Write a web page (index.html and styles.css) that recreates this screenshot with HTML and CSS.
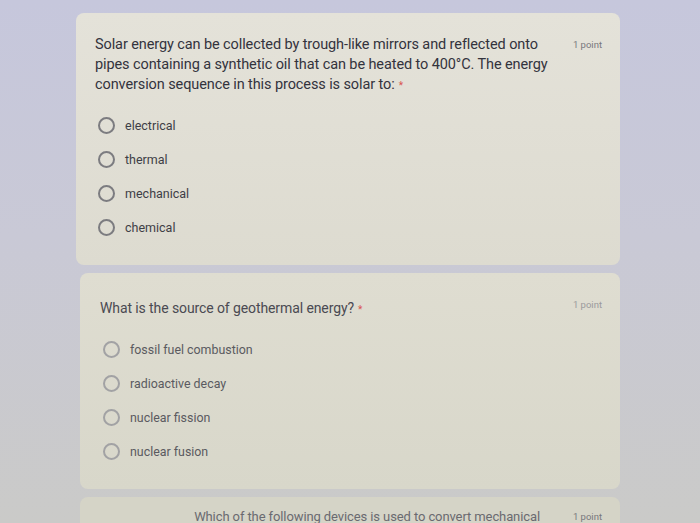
FILE: index.html
```html
<!DOCTYPE html>
<html>
<head>
<meta charset="utf-8">
<link rel="stylesheet" href="styles.css">
</head>
<body>
<div class="page">
  <section class="card card-one">
    <div class="head">
      <div class="question">Solar energy can be collected by trough-like mirrors and reflected onto pipes containing a synthetic oil that can be heated to 400°C. The energy conversion sequence in this process is solar to:<span class="req">*</span></div>
      <div class="points">1 point</div>
    </div>
    <ul class="options">
      <li><span class="radio"></span><span class="label">electrical</span></li>
      <li><span class="radio"></span><span class="label">thermal</span></li>
      <li><span class="radio"></span><span class="label">mechanical</span></li>
      <li><span class="radio"></span><span class="label">chemical</span></li>
    </ul>
  </section>
  <section class="card card-two">
    <div class="head">
      <div class="question">What is the source of geothermal energy?<span class="req">*</span></div>
      <div class="points">1 point</div>
    </div>
    <ul class="options">
      <li><span class="radio"></span><span class="label">fossil fuel combustion</span></li>
      <li><span class="radio"></span><span class="label">radioactive decay</span></li>
      <li><span class="radio"></span><span class="label">nuclear fission</span></li>
      <li><span class="radio"></span><span class="label">nuclear fusion</span></li>
    </ul>
  </section>
  <section class="card card-three">
    <div class="head">
      <div class="question">Which of the following devices is used to convert mechanical</div>
      <div class="points">1 point</div>
    </div>
  </section>
</div>
</body>
</html>
```
FILE: styles.css
```css
html, body {
  margin: 0;
  padding: 0;
}
body {
  width: 700px;
  height: 523px;
  overflow: hidden;
  background: linear-gradient(180deg, #c6c7dc 0%, #c9c9d6 45%, #cacac8 100%);
  font-family: "Roboto", "Liberation Sans", sans-serif;
}
.page {
  padding: 13px 80px 0 76px;
  display: flex;
  flex-direction: column;
  gap: 8px;
}
.card {
  border-radius: 8px;
  background: #e2e0d5;
}
.card-one {
  height: 252px;
  padding: 22px 18px 0 19px;
  box-sizing: border-box;
  background: linear-gradient(180deg, #e4e2d9 0%, #dddbd0 100%);
}
.card-two {
  margin-left: 4px;
  height: 216px;
  padding: 22px 18px 0 20px;
  box-sizing: border-box;
  background: linear-gradient(180deg, #dfddd1 0%, #d8d7ca 100%);
}
.card-three {
  margin-left: 4px;
  height: 40px;
  padding: 12px 18px 0 20px;
  box-sizing: border-box;
  background: #d5d4c7;
}
.head {
  display: flex;
  justify-content: space-between;
  align-items: flex-start;
}
.question {
  width: 462px;
  font-size: 14.5px;
  line-height: 20px;
  color: #33333d;
  letter-spacing: -0.1px;
}
.card-two .question {
  font-size: 14px;
  color: #4a4a52;
  padding-top: 3px;
}
.card-three .question {
  color: #6a6a70;
  text-align: right;
  width: 440px;
  font-size: 13px;
  line-height: 16px;
}
.req {
  color: #d9534f;
  font-size: 10px;
  margin-left: 4px;
}
.points {
  font-size: 9.5px;
  line-height: 20px;
  color: #77777c;
  white-space: nowrap;
}
.card-two .points {
  color: #9a9a9c;
}
.card-three .points {
  line-height: 16px;
}
.options {
  list-style: none;
  margin: 12px 0 0 0;
  padding: 0 0 0 3px;
  display: flex;
  flex-direction: column;
}
.card-two .options {
  margin-top: 12px;
  padding-left: 3px;
}
.options li {
  height: 34px;
  display: flex;
  align-items: center;
  gap: 10px;
}
.radio {
  width: 13px;
  height: 13px;
  border: 2px solid #7c7c80;
  border-radius: 50%;
  flex: none;
}
.card-two .radio {
  border-color: #a2a2a4;
}
.label {
  font-size: 12.5px;
  color: #3e3e46;
}
.card-two .label {
  font-size: 12.4px;
  color: #5a5a60;
}
```
